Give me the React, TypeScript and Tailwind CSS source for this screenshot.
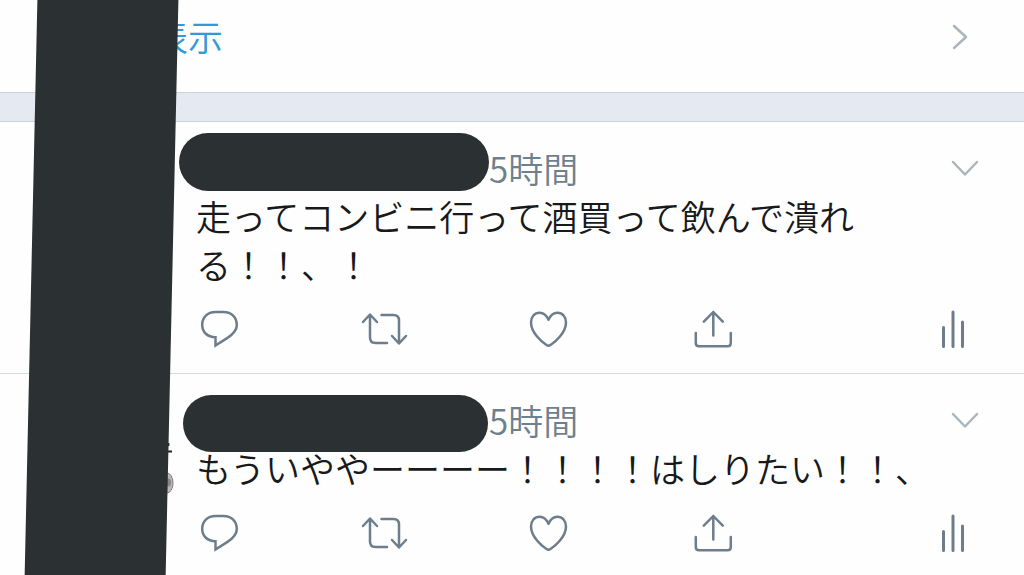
import React from 'react';

interface Tweet {
  id: number;
  time: string;
  text: string;
  nameClass: string;
  avatarEdge?: boolean;
}

const tweets: Tweet[] = [
  {
    id: 1,
    time: '5時間',
    text: '走ってコンビニ行って酒買って飲んで潰れる！！、！',
    nameClass: 'left-[-17px] top-[-11px] w-[310px] h-[58px]',
  },
  {
    id: 2,
    time: '5時間',
    text: 'もういややーーーー！！！！はしりたい！！、',
    nameClass: 'left-[-13px] top-[-1px] w-[305px] h-[57px]',
    avatarEdge: true,
  },
];

const iconProps = {
  fill: 'none',
  stroke: 'currentColor',
  strokeWidth: 2.5,
  strokeLinecap: 'round' as const,
  strokeLinejoin: 'round' as const,
  'aria-hidden': true,
};

const ReplyIcon = () => (
  <svg width="40" height="40" viewBox="0 0 40 40" {...iconProps} strokeLinejoin="miter">
    <path d="M15.5 28.2V36.5L27.5 28.9C34 24.6 36.8 21 36.8 16C36.8 8.5 31.5 3 23.5 3H15.5C7.5 3 2.2 8.5 2.2 15.7C2.2 23.2 7.5 28.2 15.5 28.2Z" />
  </svg>
);

const RetweetIcon = () => (
  <svg width="48" height="40" viewBox="0 0 48 40" {...iconProps}>
    <path d="M2 13L9 5.5L16 13M9 6V28.5Q9 34 14.5 34H26" />
    <path d="M20.5 6H32.5Q38 6 38 11.5V34M31 27L38 34.5L45 27" />
  </svg>
);

const LikeIcon = () => (
  <svg width="40" height="40" viewBox="0 0 40 40" {...iconProps}>
    <path d="M19.5 10.8C17.4 6.1 14.3 3.7 10.7 3.7C5.5 3.7 2 7.8 2 13.5C2 23.7 13 33.3 17.5 36Q19.5 37.3 21.5 36C26 33.3 37 23.7 37 13.5C37 7.8 33.5 3.7 28.3 3.7C24.7 3.7 21.6 6.1 19.5 10.8Z" />
  </svg>
);

const ShareIcon = () => (
  <svg width="40" height="40" viewBox="0 0 40 40" {...iconProps}>
    <path d="M19.3 26.5V3M9.8 12.7L19.3 3L28.8 12.7" />
    <path d="M1.8 24V34Q1.8 37.3 5 37.3H33.6Q36.8 37.3 36.8 34V24" />
  </svg>
);

const StatsIcon = () => (
  <svg width="26" height="40" viewBox="0 0 26 40" {...iconProps} strokeWidth={3}>
    <path d="M3.5 18.5V37.5M13 3V37.5M22.5 13V37.5" />
  </svg>
);

const actions = [
  { label: '返信', Icon: ReplyIcon },
  { label: 'リツイート', Icon: RetweetIcon },
  { label: 'いいね', Icon: LikeIcon },
  { label: '共有', Icon: ShareIcon },
  { label: 'アクティビティ', Icon: StatsIcon },
];

const TweetItem: React.FC<{ tweet: Tweet }> = ({ tweet }) => (
  <article className="flex pr-[45px] pt-[22px] pb-6">
    <div className="w-[196px] shrink-0">
      {tweet.avatarEdge && (
        <svg width="20" height="56" viewBox="0 0 20 56" className="ml-[156px] mt-11" aria-hidden>
          <path d="M10 11.5H16M12.5 3V6" stroke="#222" strokeWidth="1.8" fill="none" />
          <ellipse cx="11" cy="43" rx="6" ry="10" fill="#bdb8b8" stroke="#807c7c" />
          <ellipse cx="12.5" cy="42.5" rx="2.5" ry="4" fill="#8b8585" />
        </svg>
      )}
    </div>
    <div className="min-w-0 flex-1">
      <div className="relative flex h-12 items-center justify-between">
        <span className={`absolute rounded-full bg-[#2b3033] ${tweet.nameClass}`} />
        <time className="ml-[293px] text-[35px] leading-[48px] text-[#6e7f8e]">{tweet.time}</time>
        <button aria-label="メニュー" className="text-[#aab5bf]">
          <svg width="28" height="18" viewBox="0 0 28 18" {...iconProps}>
            <path d="M2 3L14 15.5L26 3" />
          </svg>
        </button>
      </div>
      <p className="text-[35px] leading-[48px] text-[#17191b]">{tweet.text}</p>
      <div className="mt-[21px] grid grid-cols-[11fr_11fr_11fr_16fr_auto] pr-[2px] text-[#6d7d8b]">
        {actions.map(({ label, Icon }) => (
          <button key={label} aria-label={label} className="flex w-12 justify-center">
            <Icon />
          </button>
        ))}
      </div>
    </div>
  </article>
);

export default function App() {
  return (
    <main
      lang="ja"
      className="relative min-h-screen overflow-hidden bg-[#fefefe] font-['Noto_Sans_CJK_JP',sans-serif] font-[350]"
    >
      <a href="#thread" className="flex h-[92px] items-center justify-between pb-5 pl-[153px] pr-[56px]">
        <span className="text-[35px] leading-[48px] text-[#3499d8]">表示</span>
        <svg width="16" height="28" viewBox="0 0 16 28" className="text-[#aab5bf]" {...iconProps}>
          <path d="M2 4L14 15L2 26" />
        </svg>
      </a>
      <div className="h-[30px] border-y border-[#cbd3da] bg-[#e5eaf2]" />
      <div className="divide-y divide-[#d3d9de]">
        {tweets.map((tweet) => (
          <TweetItem key={tweet.id} tweet={tweet} />
        ))}
      </div>
      <div className="absolute inset-y-0 left-[31px] w-[141px] skew-x-[-1.27deg] bg-[#2b3033]" />
    </main>
  );
}
